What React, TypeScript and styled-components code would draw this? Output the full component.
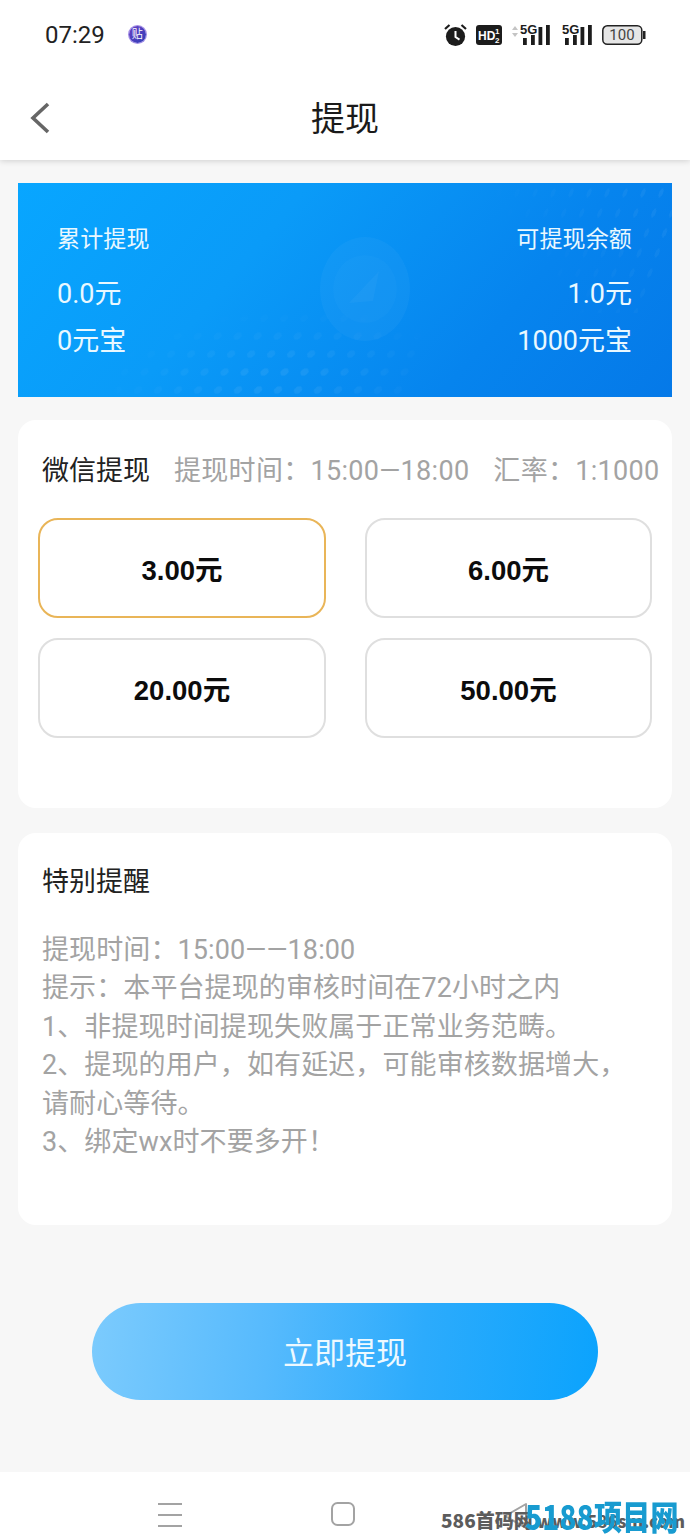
import styled, { createGlobalStyle } from 'styled-components';

const GlobalStyle = createGlobalStyle`
  html, body {
    margin: 0;
    padding: 0;
    background: #f7f7f7;
  }
  * {
    box-sizing: border-box;
  }
`;

const FONT = `Roboto, "Noto Sans CJK SC", "Noto Sans", sans-serif`;

const Page = styled.div`
  position: relative;
  display: flex;
  flex-direction: column;
  width: 690px;
  height: 1538px;
  overflow: hidden;
  background: #f7f7f7;
  font-family: ${FONT};
`;

const TopBar = styled.header`
  display: flex;
  flex-direction: column;
  height: 160px;
  background: #fff;
  box-shadow: 0 1px 6px rgba(0, 0, 0, 0.16);
`;

const StatusBar = styled.div`
  display: flex;
  align-items: center;
  height: 70px;
  padding: 0 44px 0 45px;
`;

const Clock = styled.span`
  font-size: 24px;
  color: #222;
`;

const StickerBadge = styled.span`
  position: relative;
  display: flex;
  align-items: center;
  justify-content: center;
  width: 17px;
  height: 17px;
  margin-left: 24px;
  margin-top: -2px;
  border-radius: 50%;
  background: linear-gradient(135deg, #6a3fc4, #2f3fb8);
  box-shadow: 0 0 0 1px #a48ee8;
  color: #fff;
  font-size: 11px;
  line-height: 1;
  &::after {
    content: '';
    position: absolute;
    left: 6px;
    bottom: -3px;
    width: 5px;
    height: 5px;
    background: #3a3fb8;
    transform: rotate(45deg);
    z-index: -1;
  }
`;

const StatusIcons = styled.div`
  display: flex;
  align-items: center;
  gap: 9px;
  margin-left: auto;
`;

const NavRow = styled.div`
  position: relative;
  display: flex;
  align-items: center;
  justify-content: center;
  height: 90px;
  padding-top: 2px;
`;

const BackButton = styled.button`
  position: absolute;
  left: 28px;
  top: 30px;
  padding: 0;
  border: 0;
  background: none;
  line-height: 0;
`;

const PageTitle = styled.h1`
  margin: 0;
  font-size: 34px;
  font-weight: 400;
  color: #1a1a1a;
`;

const Content = styled.main`
  display: flex;
  flex-direction: column;
  padding: 23px 18px 0;
`;

const Banner = styled.section`
  position: relative;
  display: flex;
  justify-content: space-between;
  height: 214px;
  padding: 39px 40px 0 39px;
  overflow: hidden;
  background: linear-gradient(130deg, #08a6ff 0%, #0a9bf8 35%, #0684ee 72%, #0579e8 100%);
  color: #e9f8ff;
  &::before {
    content: '';
    position: absolute;
    left: 110px;
    top: 90px;
    width: 300px;
    height: 124px;
    background-image: radial-gradient(circle, rgba(255, 255, 255, 0.07) 3.500px, transparent 4px);
    background-size: 20px 18px;
    transform: skewX(-20deg);
    -webkit-mask-image: radial-gradient(ellipse 60% 60% at 55% 85%, #000 15%, transparent 100%);
    mask-image: radial-gradient(ellipse 60% 60% at 55% 85%, #000 15%, transparent 100%);
  }
  &::after {
    content: '';
    position: absolute;
    right: 0;
    top: 0;
    width: 220px;
    height: 130px;
    background-image: radial-gradient(ellipse 2px 5px, rgba(255, 255, 255, 0.06) 90%, transparent 100%);
    background-size: 18px 20px;
    transform: skewX(-20deg);
    -webkit-mask-image: linear-gradient(225deg, #000 10%, transparent 65%);
    mask-image: linear-gradient(225deg, #000 10%, transparent 65%);
  }
`;

const BannerMark = styled.svg`
  position: absolute;
  left: 301px;
  top: 52px;
`;

const BannerColumn = styled.div<{ $right?: boolean }>`
  position: relative;
  z-index: 1;
  display: flex;
  flex-direction: column;
  align-items: ${p => (p.$right ? 'flex-end' : 'flex-start')};
`;

const BannerLabel = styled.div`
  height: 35px;
  margin-bottom: 14px;
  font-size: 23px;
  line-height: 35px;
  letter-spacing: 0.15px;
`;

const BannerValue = styled.div`
  height: 47px;
  font-size: 27px;
  line-height: 47px;
`;

const Card = styled.section<{ $height: number; $top: number }>`
  height: ${p => p.$height}px;
  margin-top: ${p => p.$top}px;
  border-radius: 18px;
  background: #fff;
`;

const WithdrawCard = styled(Card)`
  padding: 30px 20px 0;
`;

const MethodRow = styled.div`
  display: flex;
  align-items: center;
  height: 37px;
  padding-left: 4px;
  white-space: nowrap;
`;

const MethodName = styled.span`
  flex: none;
  width: 132px;
  font-size: 27px;
  color: #222;
`;

const MethodMeta = styled.span`
  flex: none;
  font-size: 27px;
  letter-spacing: 0.3px;
  color: #a3a3a3;
  & + & {
    margin-left: 24px;
  }
`;

const AmountGrid = styled.div`
  display: grid;
  grid-template-columns: 288px 287px;
  grid-auto-rows: 100px;
  column-gap: 39px;
  row-gap: 20px;
  margin-top: 31px;
`;

const AmountButton = styled.button<{ $selected?: boolean }>`
  padding: 0;
  border: 2px solid ${p => (p.$selected ? '#e9b558' : '#dfdfdf')};
  border-radius: 20px;
  background: #fff;
  color: #0c0c0c;
  font-family: "Liberation Sans", ${FONT};
  font-size: 27.500px;
  font-weight: 700;
`;

const NoticeCard = styled(Card)`
  padding: 29px 24px 0;
`;

const NoticeTitle = styled.h2`
  margin: 0 0 29px;
  font-size: 27px;
  line-height: 40px;
  font-weight: 400;
  color: #222;
`;

const NoticeLine = styled.p`
  margin: 0;
  font-size: 27px;
  line-height: 38.400px;
  letter-spacing: 0.1px;
  color: #a3a3a3;
  white-space: nowrap;
`;

const SubmitRow = styled.div`
  display: flex;
  justify-content: center;
  margin-top: 78px;
`;

const SubmitButton = styled.button`
  width: 506px;
  height: 97px;
  padding: 0 0 2px;
  border: 0;
  border-radius: 49px;
  background: linear-gradient(96deg, #7ccbfd 0%, #56bafd 35%, #2cabfc 65%, #0ba3fd 100%);
  color: #eef9ff;
  font-family: ${FONT};
  font-size: 31px;
`;

const SystemNav = styled.nav`
  position: absolute;
  left: 0;
  right: 0;
  bottom: 0;
  display: flex;
  height: 66px;
  background: #fff;
`;

const NavSlot = styled.div<{ $x: number }>`
  position: absolute;
  left: ${p => p.$x}px;
  top: 30px;
  line-height: 0;
`;

const WatermarkText = styled.span`
  position: absolute;
  left: 441px;
  top: 1506px;
  font-family: "Noto Sans CJK SC", sans-serif;
  font-size: 19px;
  font-weight: 900;
  color: #5c5c5c;
  white-space: nowrap;
`;

const WatermarkUrl = styled.span`
  margin-left: 4px;
  font-size: 17px;
`;

const WatermarkLogo = styled.span`
  position: absolute;
  left: 525px;
  top: 1502px;
  font-family: "Noto Sans CJK SC", sans-serif;
  font-size: 28px;
  font-weight: 900;
  line-height: 28px;
  letter-spacing: 0.2px;
  color: #189bd0;
  white-space: nowrap;
  transform: scaleY(1.2);
`;

const SignalBars = ({ arrows }: { arrows?: boolean }) => (
  <svg width={arrows ? 41 : 31} height="26" viewBox={arrows ? '-9 -2 41 26' : '-1 -2 31 26'}>
    {arrows && (
      <g fill="#c4c4c4">
        <path d="M-8 6 L-5 2 L-2 6Z" />
        <path d="M-8 9 L-5 13 L-2 9Z" />
      </g>
    )}
    <text x="0" y="10" fontFamily="Liberation Sans" fontSize="13" fontWeight="700" fill="#1c1c1c">
      5G
    </text>
    <g fill="#1c1c1c">
      <rect x="3" y="14" width="3.800" height="7" />
      <rect x="11" y="11" width="3.800" height="10" />
      <rect x="18.500" y="3" width="3.800" height="18" />
      <rect x="26" y="1" width="3.800" height="20" />
    </g>
  </svg>
);

export default function App() {
  return (
    <>
      <GlobalStyle />
      <Page>
        <TopBar>
          <StatusBar>
            <Clock>07:29</Clock>
            <StickerBadge>贴</StickerBadge>
            <StatusIcons>
              <svg width="23" height="24" viewBox="0 0 23 24">
                <circle cx="11.500" cy="13.500" r="9.600" fill="#1c1c1c" />
                <path d="M11.500 8v6l4 2.600" stroke="#fff" strokeWidth="2" fill="none" />
                <path d="M1 6 L5.500 2M22 6 L17.500 2" stroke="#1c1c1c" strokeWidth="2.200" />
              </svg>
              <svg width="26" height="20" viewBox="0 0 26 20">
                <rect width="26" height="20" rx="3" fill="#1c1c1c" />
                <text x="2" y="15" fontFamily="Liberation Sans" fontSize="12" fontWeight="700" fill="#fff">
                  HD
                </text>
                <text x="19" y="9" fontFamily="Liberation Sans" fontSize="8" fontWeight="700" fill="#fff">
                  1
                </text>
                <text x="19" y="18" fontFamily="Liberation Sans" fontSize="8" fontWeight="700" fill="#fff">
                  2
                </text>
              </svg>
              <SignalBars arrows />
              <SignalBars />
              <svg width="45" height="20" viewBox="0 0 45 20">
                <rect x="1.800" y="0.800" width="39" height="18.400" rx="4.500" fill="#e6e6e6" stroke="#222" strokeWidth="1.500" />
                <rect x="42" y="6" width="2.500" height="8" fill="#222" />
                <text x="21" y="15" textAnchor="middle" fontFamily="Roboto" fontSize="15" fill="#444">
                  100
                </text>
              </svg>
            </StatusIcons>
          </StatusBar>
          <NavRow>
            <BackButton>
              <svg width="24" height="36" viewBox="0 0 24 36">
                <path d="M20 4 L5 18 L20 32" fill="none" stroke="#666" strokeWidth="3.600" />
              </svg>
            </BackButton>
            <PageTitle>提现</PageTitle>
          </NavRow>
        </TopBar>

        <Content>
          <Banner>
            <BannerMark width="92" height="108" viewBox="0 0 92 108">
              <ellipse cx="46" cy="54" rx="45" ry="52" fill="#fff" opacity="0.035" />
              <ellipse cx="46" cy="54" rx="32" ry="34" fill="#fff" opacity="0.02" />
              <path d="M30 68 L60 36 L54 66Z" fill="#fff" opacity="0.03" />
            </BannerMark>
            <BannerColumn>
              <BannerLabel>累计提现</BannerLabel>
              <BannerValue>0.0元</BannerValue>
              <BannerValue>0元宝</BannerValue>
            </BannerColumn>
            <BannerColumn $right>
              <BannerLabel>可提现余额</BannerLabel>
              <BannerValue>1.0元</BannerValue>
              <BannerValue>1000元宝</BannerValue>
            </BannerColumn>
          </Banner>

          <WithdrawCard $height={388} $top={23}>
            <MethodRow>
              <MethodName>微信提现</MethodName>
              <MethodMeta>提现时间：15:00—18:00</MethodMeta>
              <MethodMeta>汇率：1:1000</MethodMeta>
            </MethodRow>
            <AmountGrid>
              <AmountButton $selected>3.00元</AmountButton>
              <AmountButton>6.00元</AmountButton>
              <AmountButton>20.00元</AmountButton>
              <AmountButton>50.00元</AmountButton>
            </AmountGrid>
          </WithdrawCard>

          <NoticeCard $height={392} $top={25}>
            <NoticeTitle>特别提醒</NoticeTitle>
            <NoticeLine>提现时间：15:00——18:00</NoticeLine>
            <NoticeLine>提示：本平台提现的审核时间在72小时之内</NoticeLine>
            <NoticeLine>1、非提现时间提现失败属于正常业务范畴。</NoticeLine>
            <NoticeLine>2、提现的用户，如有延迟，可能审核数据增大，</NoticeLine>
            <NoticeLine>请耐心等待。</NoticeLine>
            <NoticeLine>3、绑定wx时不要多开！</NoticeLine>
          </NoticeCard>
        </Content>

        <SubmitRow>
          <SubmitButton>立即提现</SubmitButton>
        </SubmitRow>

        <SystemNav>
          <NavSlot $x={158}>
            <svg width="24" height="26" viewBox="0 0 24 26">
              <path d="M0 2h24M0 13h24M0 24h24" stroke="#a3a3a3" strokeWidth="2" />
            </svg>
          </NavSlot>
          <NavSlot $x={331}>
            <svg width="24" height="24" viewBox="0 0 24 24">
              <rect x="1" y="1" width="22" height="22" rx="5.500" fill="none" stroke="#a3a3a3" strokeWidth="2" />
            </svg>
          </NavSlot>
          <NavSlot $x={503}>
            <svg width="26" height="28" viewBox="0 0 26 28">
              <path d="M2 14 L23 2 V26 Z" fill="none" stroke="#a3a3a3" strokeWidth="2" strokeLinejoin="round" />
            </svg>
          </NavSlot>
        </SystemNav>
        <WatermarkText>
          586首码网<WatermarkUrl>www.586sm.com</WatermarkUrl>
        </WatermarkText>
        <WatermarkLogo>5188项目网</WatermarkLogo>
      </Page>
    </>
  );
}
